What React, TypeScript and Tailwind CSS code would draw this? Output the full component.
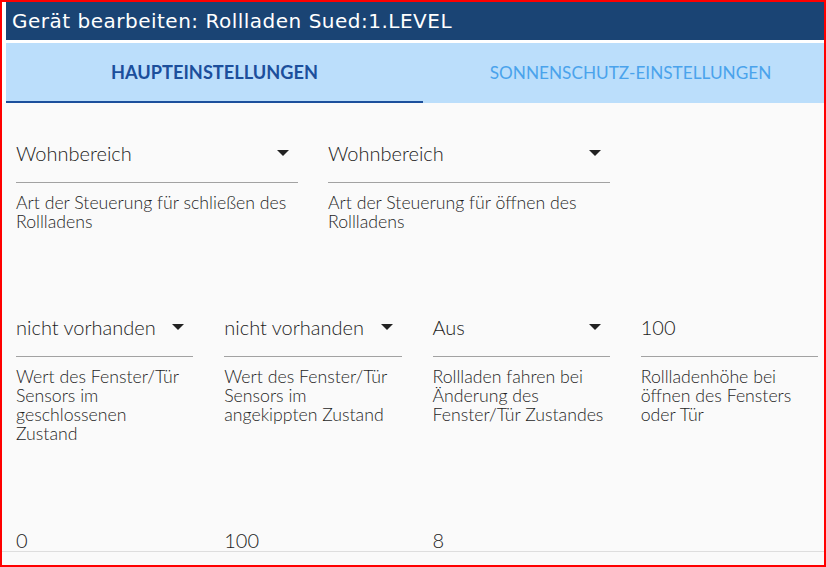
import React from "react";

type Field = {
  value: string;
  label: string[];
  select?: boolean;
};

const firstRow: Field[] = [
  {
    value: "Wohnbereich",
    label: ["Art der Steuerung für schließen des", "Rollladens"],
    select: true,
  },
  {
    value: "Wohnbereich",
    label: ["Art der Steuerung für öffnen des", "Rollladens"],
    select: true,
  },
];

const secondRow: Field[] = [
  {
    value: "nicht vorhanden",
    label: ["Wert des Fenster/Tür", "Sensors im", "geschlossenen", "Zustand"],
    select: true,
  },
  {
    value: "nicht vorhanden",
    label: ["Wert des Fenster/Tür", "Sensors im", "angekippten Zustand"],
    select: true,
  },
  {
    value: "Aus",
    label: ["Rollladen fahren bei", "Änderung des", "Fenster/Tür Zustandes"],
    select: true,
  },
  {
    value: "100",
    label: ["Rollladenhöhe bei", "öffnen des Fensters", "oder Tür"],
  },
];

const thirdRow: Field[] = [
  { value: "0", label: [] },
  { value: "100", label: [] },
  { value: "8", label: [] },
];

function DropArrow() {
  return (
    <svg width="12" height="6" viewBox="0 0 12 6" className="shrink-0">
      <path d="M0 0h12L6 6z" fill="#222" />
    </svg>
  );
}

function FormField({ field }: { field: Field }) {
  return (
    <div className="flex flex-col">
      <div className="flex h-[45px] items-start justify-between border-b border-[#a2a2a2] pr-[9px]">
        <span className="text-[20px] font-light leading-[30px] text-[#1c1c1c]">
          {field.value}
        </span>
        {field.select && (
          <span className="flex h-[30px] items-center">
            <DropArrow />
          </span>
        )}
      </div>
      {field.label.length > 0 && (
        <div className="mt-[10px] text-[17.7px] font-light leading-[19px] text-[#1f1f1f]">
          {field.label.map((line, i) => (
            <div key={i}>{line}</div>
          ))}
        </div>
      )}
    </div>
  );
}

export default function App() {
  return (
    <div className="flex h-[567px] w-[826px] flex-col overflow-hidden border-2 border-[#ff0000] bg-[#fafafa] font-['Lato',sans-serif]">
      <div className="flex flex-col gap-[3px] bg-white pl-[4px]">
        <div className="flex h-[38px] items-center bg-[#1a4474] pl-[6px] font-['DejaVu_Sans',sans-serif] text-[20px] tracking-[0.5px] text-white">
          Gerät bearbeiten: Rollladen Sued:1.LEVEL
        </div>
        <div className="flex h-[60px] bg-[#bbdefb]">
          <div className="flex w-[417px] items-center justify-center border-b-2 border-[#1c4f9c] pt-[2px] text-[18.2px] font-bold text-[#1c4f9c]">
            HAUPTEINSTELLUNGEN
          </div>
          <div className="flex flex-1 items-center justify-center pl-[14px] text-[17.2px] text-[#4aa3ec]">
            SONNENSCHUTZ-EINSTELLUNGEN
          </div>
        </div>
      </div>

      <div className="flex-1 overflow-hidden px-[14px] pt-[35px]">
        <div className="grid w-[594px] grid-cols-2 gap-x-[30px]">
          {firstRow.map((f, i) => (
            <FormField key={i} field={f} />
          ))}
        </div>
        <div className="mt-[81px] grid w-[802px] grid-cols-4 gap-x-[31px]">
          {secondRow.map((f, i) => (
            <FormField key={i} field={f} />
          ))}
        </div>
        <div className="mt-[82px] grid w-[802px] grid-cols-4 gap-x-[31px]">
          {thirdRow.map((f, i) => (
            <FormField key={i} field={f} />
          ))}
        </div>
      </div>

      <div className="h-[14px] shrink-0 border-t border-[#dedede]" />
    </div>
  );
}
